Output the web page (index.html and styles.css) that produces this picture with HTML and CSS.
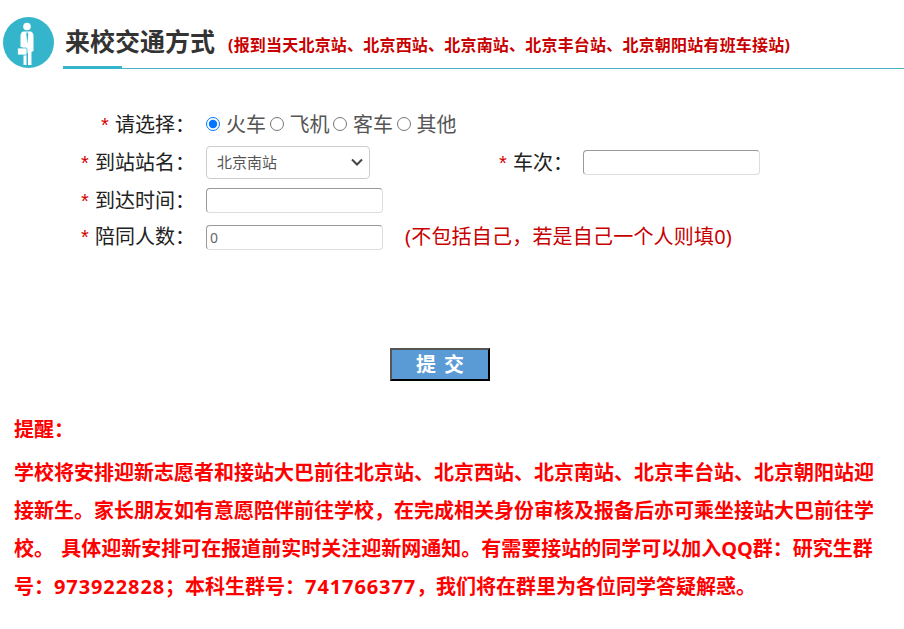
FILE: index.html
```html
<!DOCTYPE html>
<html lang="zh-CN">
<head>
  <meta charset="UTF-8">
  <title>来校交通方式</title>
  <link rel="stylesheet" href="styles.css">
</head>
<body>
  <div class="header">
    <svg class="header-icon" width="51" height="51" viewBox="0 0 51 51">
      <circle cx="25.500" cy="25.500" r="25.500" fill="#35b5cb"/>
      <circle cx="24" cy="9.500" r="3.800" fill="#fff"/>
      <path d="M20 14.500 L28 14.500 Q30.500 15.500 30.500 19 L30.500 34 L28.500 35 L28.500 48 L25 48 L25 36 L23.500 36 L23.500 48 L20.500 48 L20.500 38 L19 30 L17.500 30 L17.500 19 Q17.500 15.500 20 14.500 Z" fill="#fff"/>
      <path d="M24 14.500 L25.300 17 L24.300 27 L23.300 17 Z" fill="#35b5cb"/>
      <rect x="14.500" y="31" width="9.500" height="7" rx="1" fill="#fff" stroke="#35b5cb" stroke-width="0.800"/>
    </svg>
    <div class="header-main">
      <div class="header-title">
        <h2>来校交通方式</h2>
        <span class="header-note">(报到当天北京站、北京西站、北京南站、北京丰台站、北京朝阳站有班车接站)</span>
      </div>
      <div class="header-rule"></div>
    </div>
  </div>

  <form class="form">
    <div class="row row-type">
      <label class="row-label"><span class="star">*</span> 请选择：</label>
      <div class="radios">
        <input type="radio" name="type" checked><span>火车</span>
        <input type="radio" name="type"><span>飞机</span>
        <input type="radio" name="type"><span>客车</span>
        <input type="radio" name="type"><span>其他</span>
      </div>
    </div>
    <div class="row row-station">
      <label class="row-label"><span class="star">*</span> 到站站名：</label>
      <select class="station">
        <option>北京南站</option>
      </select>
      <label class="train-label"><span class="star">*</span> 车次：</label>
      <input type="text" class="field">
    </div>
    <div class="row row-time">
      <label class="row-label"><span class="star">*</span> 到达时间：</label>
      <input type="text" class="field">
    </div>
    <div class="row row-people">
      <label class="row-label"><span class="star">*</span> 陪同人数：</label>
      <input type="text" class="field" value="0">
      <span class="people-note">(不包括自己，若是自己一个人则填0)</span>
    </div>
    <div class="submit-row">
      <button type="button" class="submit">提 交</button>
    </div>
  </form>

  <div class="notice">
    <p class="notice-title">提醒：</p>
    <p class="notice-text">学校将安排迎新志愿者和接站大巴前往北京站、北京西站、北京南站、北京丰台站、北京朝阳站迎接新生。家长朋友如有意愿陪伴前往学校，在完成相关身份审核及报备后亦可乘坐接站大巴前往学校。 具体迎新安排可在报道前实时关注迎新网通知。有需要接站的同学可以加入QQ群：研究生群</p>
    <p class="notice-last">号：<span class="num">973922828</span>；本科生群号：<span class="num">741766377</span>，我们将在群里为各位同学答疑解惑。</p>
  </div>
</body>
</html>
```

FILE: styles.css
```css
body {
  margin: 0;
  font-family: "Noto Sans", "Noto Sans CJK SC", sans-serif;
  color: #222;
  background: #fff;
}
.header {
  display: flex;
  padding: 18px 0 0 3px;
}
.header-icon {
  flex: none;
  margin-right: 9px;
  margin-top: -1px;
}
.header-main {
  flex: 1;
}
.header-title {
  display: flex;
  align-items: baseline;
  padding-left: 2px;
  height: 48px;
  line-height: 46px;
}
.header-title h2 {
  margin: 0;
  font-size: 25px;
  font-weight: bold;
  color: #333;
}
.header-note {
  margin-left: 13px;
  font-size: 16px;
  font-weight: bold;
  letter-spacing: 0.200px;
  color: #c80000;
}
.header-rule {
  height: 1px;
  margin-top: 2px;
  background: #4cb5c5;
  position: relative;
}
.header-rule::before {
  content: "";
  position: absolute;
  left: 0;
  bottom: 0;
  width: 59px;
  height: 3px;
  background: #35b5cb;
}
.form {
  margin-top: 36px;
}
.row {
  display: flex;
  align-items: center;
  height: 38px;
  font-size: 20px;
}
.row-people {
  height: 36px;
}
.row-label,
.train-label,
.radios span {
  padding-bottom: 2px;
}
.row-label {
  width: 206px;
  text-align: right;
  padding-right: 11px;
  box-sizing: border-box;
  white-space: nowrap;
}
.row-people .row-label,
.people-note {
  padding-bottom: 4px;
}
.star {
  margin-right: 1px;
  font-family: "Liberation Sans", sans-serif;
  color: #d00000;
}
.radios {
  display: flex;
  align-items: center;
  color: #555;
}
.radios input {
  width: 14px;
  height: 14px;
  margin: 0 6px 0 3.500px;
}
.radios input:first-child {
  margin-left: 0;
}
.station {
  width: 164px;
  height: 33px;
  padding-left: 10px;
  font-size: 15px;
  font-family: inherit;
  color: #555;
  border: 1px solid #ccc;
  border-radius: 4px;
  appearance: none;
  background: #fff url("data:image/svg+xml,%3Csvg xmlns='http://www.w3.org/2000/svg' width='12' height='8'%3E%3Cpath d='M1 1.500 L6 6.500 L11 1.500' fill='none' stroke='%23444' stroke-width='2'/%3E%3C/svg%3E") no-repeat right 6px center;
}
.train-label {
  margin-left: 129px;
  width: 84px;
  white-space: nowrap;
}
.field {
  width: 177px;
  height: 25px;
  box-sizing: border-box;
  padding: 1px 3px;
  font-size: 14px;
  font-family: inherit;
  color: #666;
  border: 1px solid #ddd;
  border-top-color: #999;
  border-left-color: #999;
  border-radius: 4px;
}
.people-note {
  margin-left: 22px;
  color: #c80000;
  letter-spacing: 0.200px;
}
.submit-row {
  padding-left: 390px;
  margin-top: 93px;
}
.submit {
  display: block;
  width: 100px;
  height: 33px;
  padding: 0;
  font-size: 20px;
  font-weight: bold;
  font-family: inherit;
  line-height: 1;
  word-spacing: 3px;
  color: #fff;
  background: #5b9bd5;
  border: 2px solid;
  border-color: #555 #000 #000 #555;
}
.notice {
  padding: 0 14px;
  margin-top: 30px;
  color: #f00;
  font-weight: bold;
  font-size: 20px;
  line-height: 38px;
}
.notice p {
  margin: 0;
}
.notice-text {
  padding-top: 5px;
  word-spacing: 2px;
}
.num {
  letter-spacing: 0.900px;
}
```
